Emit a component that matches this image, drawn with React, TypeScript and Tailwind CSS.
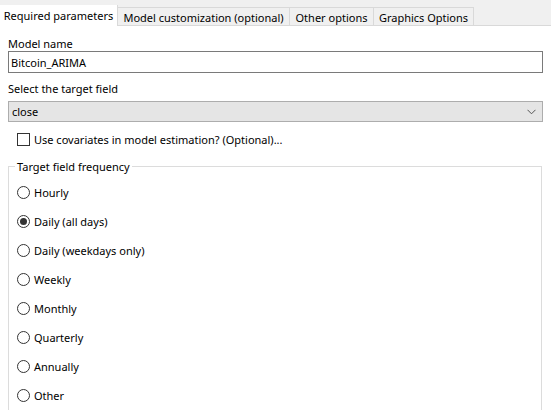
import React from "react";

const tabs = [
  { label: "Required parameters", w: "w-[118px]" },
  { label: "Model customization (optional)", w: "w-[172px]" },
  { label: "Other options", w: "w-[84px]" },
  { label: "Graphics Options", w: "w-[100px]" },
];

const frequencies = [
  "Hourly",
  "Daily (all days)",
  "Daily (weekdays only)",
  "Weekly",
  "Monthly",
  "Quarterly",
  "Annually",
  "Other",
];

function Radio({ checked }: { checked?: boolean }) {
  return (
    <span className="w-[13px] h-[13px] rounded-full border border-[#333333] bg-white flex items-center justify-center shrink-0">
      {checked && <span className="w-[7px] h-[7px] rounded-full bg-[#333333]" />}
    </span>
  );
}

export default function App() {
  return (
    <div
      className="w-[551px] h-[410px] overflow-hidden bg-white text-[11px] text-black leading-none whitespace-nowrap"
      style={{ fontFamily: '"Noto Sans", "Open Sans", sans-serif' }}
    >
      {/* tab strip */}
      <div className="h-[26px] bg-[#f0f0f0] border-b border-[#d9d9d9] flex items-end">
        {tabs.map((t, i) =>
          i === 0 ? (
            <div
              key={t.label}
              className={`${t.w} h-[21px] -mb-px bg-white border-r border-[#d9d9d9] flex items-center justify-center`}
            >
              {t.label}
            </div>
          ) : (
            <div
              key={t.label}
              className={`${t.w} h-[18px] bg-[#f0f0f0] border-t border-r border-[#d9d9d9] flex items-center justify-center pt-px`}
            >
              {t.label}
            </div>
          )
        )}
      </div>

      <div className="px-2 pt-[10px]">
        <div className="h-[14px] flex items-center">Model name</div>
        <div className="mt-px h-[22px] border border-[#7a7a7a] flex items-center px-[2px]">
          Bitcoin_ARIMA
        </div>

        <div className="mt-[8px] h-[14px] flex items-center">Select the target field</div>
        <div className="mt-[6px] h-[21px] bg-[#e5e5e5] border border-[#adadad] flex items-center justify-between pl-[3px] pr-[6px]">
          <span>close</span>
          <svg width="9" height="6" viewBox="0 0 9 6" fill="none" stroke="#555" strokeWidth="1">
            <path d="M0.5 0.8 L4.5 4.8 L8.5 0.8" />
          </svg>
        </div>

        <div className="mt-[10px] h-[14px] flex items-center gap-[4px] pl-[9px]">
          <span className="w-[13px] h-[13px] border border-[#333333] bg-white shrink-0" />
          <span>Use covariates in model estimation? (Optional)...</span>
        </div>

        <fieldset className="mt-[13px] w-[534px] h-[260px] border border-[#dcdcdc] pl-[8px]">
          <legend className="-ml-[2px] px-[2px] h-[14px] flex items-center">Target field frequency</legend>
          <div className="flex flex-col pt-[5px]">
            {frequencies.map((f, i) => (
              <div key={f} className="h-[29px] flex items-center gap-[4px]">
                <Radio checked={i === 1} />
                <span>{f}</span>
              </div>
            ))}
          </div>
        </fieldset>
      </div>
    </div>
  );
}
